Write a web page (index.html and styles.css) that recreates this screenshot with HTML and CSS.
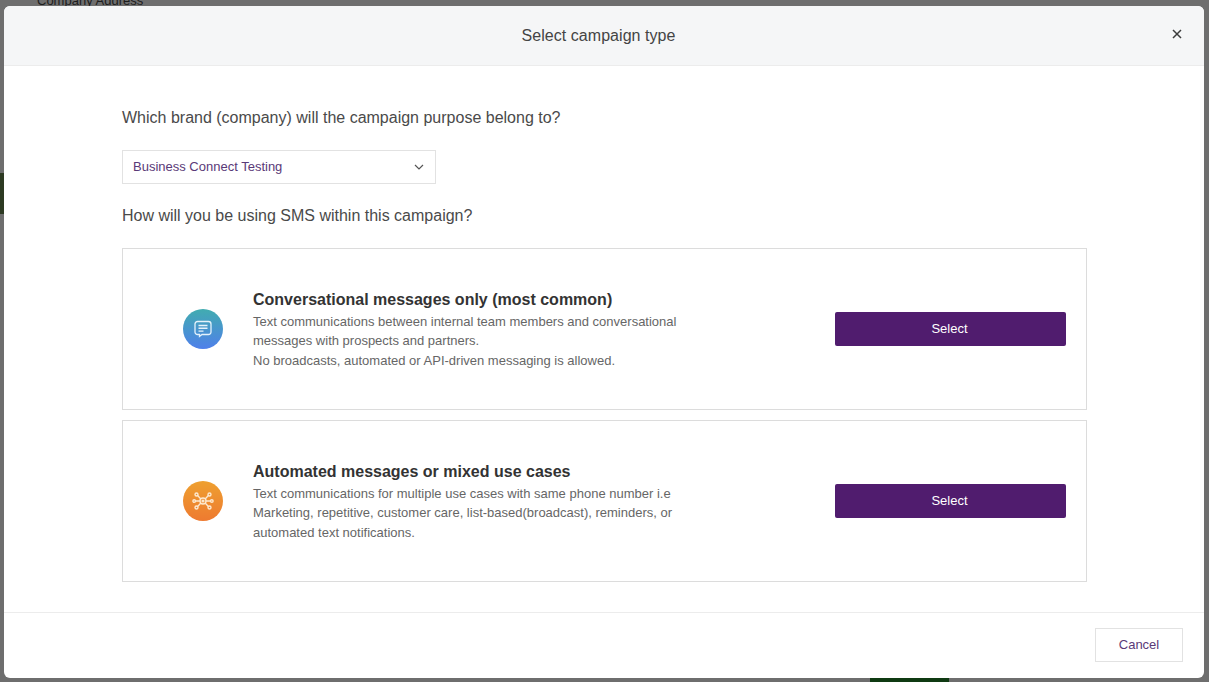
FILE: index.html
```html
<!DOCTYPE html>
<html lang="en">
<head>
<meta charset="utf-8">
<title>Select campaign type</title>
<link rel="stylesheet" href="styles.css">
</head>
<body>
<div class="behind-label">Company Address</div>
<div class="behind-bar"></div>
<div class="behind-button"></div>
<div class="modal">
  <header class="modal-header">
    <h1 class="modal-title">Select campaign type</h1>
    <svg class="close" width="10" height="10" viewBox="0 0 10 10"><path d="M1 1l8 8M9 1L1 9" stroke="#3c3c3c" stroke-width="1.500" fill="none"/></svg>
  </header>
  <main class="modal-body">
    <p class="question q-brand">Which brand (company) will the campaign purpose belong to?</p>
    <div class="select">
      <span>Business Connect Testing</span>
      <svg width="10" height="6" viewBox="0 0 10 6"><path d="M1 1l4 4 4-4" stroke="#555" stroke-width="1.200" fill="none"/></svg>
    </div>
    <p class="question q-sms">How will you be using SMS within this campaign?</p>
    <section class="card">
      <div class="icon icon-blue">
        <svg width="20" height="20" viewBox="0 0 20 20" fill="none" stroke="#e4f2fb"><path d="M4.500 2.500h11a2.500 2.500 0 0 1 2.500 2.500v8a2.500 2.500 0 0 1-2.500 2.500H9l-2.500 2V15.500h-2a2.500 2.500 0 0 1-2.500-2.500V5a2.500 2.500 0 0 1 2.500-2.500z" stroke-width="1.300"/><path d="M5.500 6.500h9M5.500 9.300h9M5.500 12.100h5" stroke-width="1.400"/></svg>
      </div>
      <div class="card-text">
        <h2 class="card-title">Conversational messages only (most common)</h2>
        <p class="card-desc">Text communications between internal team members and conversational<br>messages with prospects and partners.<br>No broadcasts, automated or API-driven messaging is allowed.</p>
      </div>
      <button class="select-btn">Select</button>
    </section>
    <section class="card">
      <div class="icon icon-orange">
        <svg width="22" height="20" viewBox="0 0 22 20" fill="none" stroke="#fde9cf" stroke-width="1.400"><circle cx="11" cy="10" r="3"/><circle cx="11" cy="10" r="0.900" fill="#fde9cf"/><circle cx="4.500" cy="3.500" r="1.500"/><circle cx="17.500" cy="3.500" r="1.500"/><circle cx="4.500" cy="16.500" r="1.500"/><circle cx="17.500" cy="16.500" r="1.500"/><circle cx="2.200" cy="10" r="1.300"/><circle cx="19.800" cy="10" r="1.300"/><path d="M5.600 4.600l3.300 3.300M16.400 4.600l-3.300 3.300M5.600 15.400l3.300-3.300M16.400 15.400l-3.300-3.300M3.500 10H8M14 10h4.500"/></svg>
      </div>
      <div class="card-text">
        <h2 class="card-title">Automated messages or mixed use cases</h2>
        <p class="card-desc">Text communications for multiple use cases with same phone number i.e<br>Marketing, repetitive, customer care, list-based(broadcast), reminders, or<br>automated text notifications.</p>
      </div>
      <button class="select-btn">Select</button>
    </section>
  </main>
  <footer class="modal-footer">
    <button class="cancel">Cancel</button>
  </footer>
</div>
</body>
</html>
```
FILE: styles.css
```css
* { box-sizing: border-box; }
html, body { margin: 0; height: 100%; }
body {
  width: 1209px;
  height: 682px;
  overflow: hidden;
  position: relative;
  background: #6e6e6e;
  padding: 6px 5px 4px 4px;
  font-family: "Liberation Sans", Arial, sans-serif;
  color: #444;
}
.behind-label {
  position: absolute;
  left: 37px;
  top: -7px;
  font-size: 13px;
  line-height: 16px;
  color: #1d1d1d;
}
.behind-bar {
  position: absolute;
  left: 0;
  top: 173px;
  width: 4px;
  height: 41px;
  background: #2d3a22;
}
.behind-button {
  position: absolute;
  left: 870px;
  top: 676px;
  width: 79px;
  height: 6px;
  background: #0f3a12;
}
.modal {
  position: relative;
  width: 1200px;
  height: 672px;
  background: #fff;
  border-radius: 6px;
  overflow: hidden;
  display: flex;
  flex-direction: column;
}
.modal-header {
  height: 60px;
  flex: none;
  position: relative;
  display: flex;
  align-items: center;
  justify-content: center;
  padding-right: 11px;
  background: #f5f6f7;
  border-bottom: 1px solid #ececec;
}
.modal-title {
  margin: 0;
  font-size: 16px;
  font-weight: 400;
  color: #444;
  letter-spacing: 0.05px;
}
.close {
  position: absolute;
  right: 22px;
  top: 23px;
}
.modal-body {
  flex: 1;
  padding: 0 117px 0 118px;
}
.question {
  margin: 0;
  font-size: 16px;
  line-height: 20px;
  color: #4a4a4a;
}
.q-brand { margin-top: 42px; }
.select {
  width: 314px;
  height: 34px;
  margin-top: 22px;
  padding: 0 11px 2px 10px;
  display: flex;
  align-items: center;
  justify-content: space-between;
  border: 1px solid #e2e2e2;
  font-size: 13px;
  color: #5a3a78;
}
.select svg { margin-top: 2px; }
.q-sms { margin-top: 22px; margin-bottom: 22px; }
.card {
  height: 162px;
  margin-bottom: 10px;
  display: flex;
  align-items: center;
  border: 1px solid #dcdcdc;
  padding-left: 60px;
}
.icon {
  width: 40px;
  height: 40px;
  flex: none;
  border-radius: 50%;
  display: flex;
  align-items: center;
  justify-content: center;
}
.icon-blue { background: linear-gradient(180deg, #41acb0, #4f80ea); }
.icon-orange { background: linear-gradient(180deg, #eea030, #ee7a30); }
.card-text {
  width: 582px;
  margin-left: 30px;
  padding: 3px 0 1px;
}
.card-title {
  margin: 0;
  font-size: 16px;
  line-height: 20px;
  font-weight: 700;
  color: #333;
}
.card-desc {
  margin: 2px 0 0;
  font-size: 13px;
  line-height: 19.500px;
  color: #666;
}
.select-btn {
  width: 231px;
  height: 34px;
  border: none;
  border-radius: 2px;
  padding: 0 2px 2px 0;
  background: #501c6e;
  color: #fff;
  font: 13px "Liberation Sans", Arial, sans-serif;
}
.modal-footer {
  height: 66px;
  flex: none;
  display: flex;
  align-items: center;
  justify-content: flex-end;
  padding: 0 21px 2px 0;
  border-top: 1px solid #ececec;
}
.cancel {
  width: 88px;
  height: 34px;
  background: #fff;
  border: 1px solid #e2e2e2;
  color: #5a3a78;
  font: 13px "Liberation Sans", Arial, sans-serif;
}
```
